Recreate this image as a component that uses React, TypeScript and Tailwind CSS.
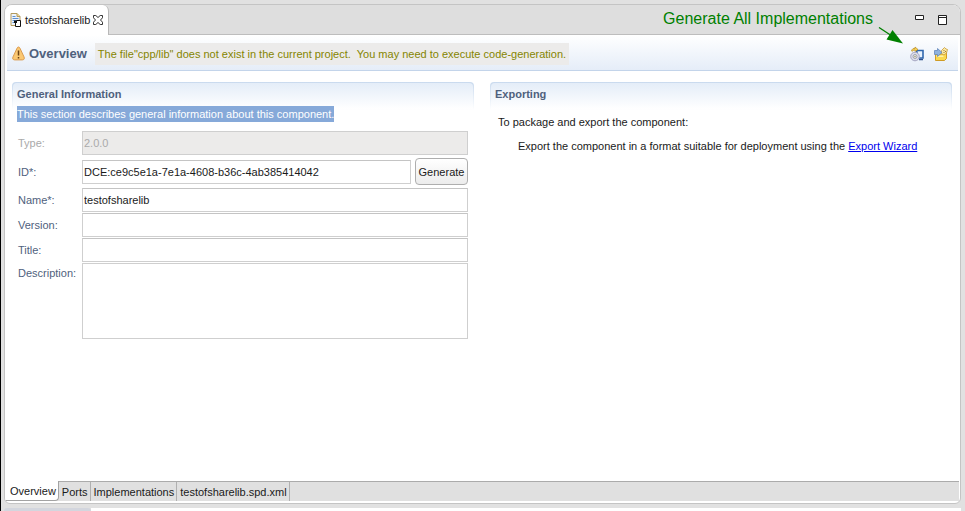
import React from "react";

const fieldClass =
  "h-6 w-full min-w-0 flex-1 border border-[#cfcfcf] border-t-[#c4c4c4] bg-white px-px text-[11px] text-[#1a1a1a] outline-none";

function FileIcon() {
  return (
    <svg width="12" height="16" viewBox="0 0 12 16" aria-hidden="true">
      <path d="M1 1.5h6l3 3v9H1z" fill="#eef4fc" stroke="#b39a5c" />
      <path d="M7 1.5v3h3" fill="#f3d98c" stroke="#b39a5c" />
      <path d="M2.5 4.5h3M2.5 6.5h6M2.5 8.5h5M2.5 10.5h3" stroke="#5b8fd0" />
      <path d="M6.5 8.500h4v6h-5v-4" fill="#fff" stroke="#111" />
      <path d="M4 8.500h3v2.500H4z" fill="#111" />
    </svg>
  );
}

function CloseIcon() {
  return (
    <svg width="10" height="10" viewBox="0 0 10 10" aria-hidden="true">
      <path
        d="M.5.5h2.300L5 2.500 7.200.5h2.300v2.300L7.500 5l2 2.200v2.300H7.200L5 7.500 2.800 9.500H.5V7.200l2-2.200-2-2.200z"
        fill="#fff"
        stroke="#333"
      />
    </svg>
  );
}

function WarningIcon() {
  return (
    <svg width="13" height="15" viewBox="0 0 13 15" aria-hidden="true">
      <path
        d="M6.500 1C7.200 1 7.600 1.500 8 2.300l4 8.600c.7 1.700.2 3-1.600 3H2.600c-1.800 0-2.300-1.300-1.600-3l4-8.600C5.400 1.500 5.800 1 6.500 1z"
        fill="#fbc872"
        stroke="#d99a50"
      />
      <path d="M6.500 4.500v5M6.500 11v1.500" stroke="#6b4216" strokeWidth="1.500" />
    </svg>
  );
}

function GenerateIcon() {
  return (
    <svg width="14" height="16" viewBox="0 0 14 16" aria-hidden="true">
      <path d="M6.500 4.500H13v7.500H8z" fill="#e8f2fd" stroke="#2f66ad" strokeWidth="1.600" />
      <path d="M9 13.500h4" stroke="#2b4f8c" strokeWidth="1.500" />
      <path d="M1.500 5C2 2.800 3.500 2 5 2.500V1l3 2.500-3 2V4.200c-1.200-.2-2 0-2.300 1z" fill="#f7d358" stroke="#b88a22" strokeWidth=".7" />
      <circle cx="5" cy="10.500" r="4.300" fill="#dedeea" stroke="#a3a4c0" />
      <circle cx="5" cy="10.500" r="2" fill="#f6f2c9" stroke="#9da1bb" />
      <circle cx="5" cy="10.500" r=".7" fill="#787c99" />
    </svg>
  );
}

function PackageIcon() {
  return (
    <svg width="14" height="16" viewBox="0 0 14 16" aria-hidden="true">
      <path d="M1.500 8h8l3-2v6.500l-2 2h-9z" fill="#fbd94f" stroke="#cf9b25" />
      <path d="M2.500 9.500h7V11h-7z" fill="#fff1a8" />
      <path d="M7.500 4.500l3-3 1.500 1.500 1.500.5-1 3.500-2.500 2-2.500-1.500z" fill="#fbe9a4" stroke="#c89a37" strokeWidth=".8" />
      <path d="M9.500 4.500h1M11 5.500h1M9.500 6.500h1" stroke="#9c7433" />
      <path d="M.5 4.500h3V2.500L8 6.500l-4.500 4V8.500h-3z" fill="#8eb2df" stroke="#6488ba" strokeWidth=".8" />
    </svg>
  );
}

function Section({ title, children }: { title: string; children: React.ReactNode }) {
  return (
    <section className="relative min-w-0">
      <div className="absolute inset-x-0 top-0 h-7 rounded-t bg-linear-to-b from-[#c9daee] to-white p-px">
        <div className="h-full rounded-t-sm bg-linear-to-b from-[#e4edf8] to-white" />
      </div>
      <div className="relative px-[5px]">
        <h2 className="flex h-6 items-center text-[11px] font-bold text-[#4f617d]">{title}</h2>
        {children}
      </div>
    </section>
  );
}

function Row({ id, label, muted, tall, children }: {
  id: string;
  label: string;
  muted?: boolean;
  tall?: boolean;
  children: React.ReactNode;
}) {
  return (
    <div className={tall ? "flex items-start" : "flex items-center"}>
      <label
        htmlFor={id}
        className={`w-16 shrink-0 ${tall ? "pt-0.5" : ""} ${muted ? "text-[#aaaaaa]" : "text-[#4f617d]"}`}
      >
        {label}
      </label>
      {children}
    </div>
  );
}

export default function App() {
  const pages = ["Ports", "Implementations", "testofsharelib.spd.xml"];
  return (
    <div className="flex min-h-screen flex-col border-l border-black bg-[#e1e1e1] pt-1 pl-[3px] font-['Liberation_Sans',Arial,sans-serif] text-[11px] leading-4 text-[#1a1a1a]">
      <div className="mr-1 flex flex-1 flex-col overflow-hidden rounded-t-lg rounded-b-md border border-[#c4c4c4] bg-white">
        <div className="flex h-[30px] shrink-0 bg-[#dedede]">
          <div role="tab" aria-selected="true" className="flex items-center gap-[3px] rounded-tr-md border-r border-[#b8b8b8] bg-white px-[5px]">
            <FileIcon />
            <span>testofsharelib</span>
            <button type="button" aria-label="Close tab">
              <CloseIcon />
            </button>
          </div>
          <div className="relative flex flex-1 items-center justify-end border-b border-[#bdbdbd] pr-[13px]">
            <div className="absolute top-[4px] right-[87px] text-base leading-5 whitespace-nowrap text-[#008000]">
              Generate All Implementations
            </div>
            <svg className="absolute top-[22px] right-[56px] z-10" width="26" height="18" viewBox="0 0 26 18" aria-hidden="true">
              <path d="M1 .5L14 9" stroke="#008000" strokeWidth="1.300" />
              <path d="M25 16.500L8.500 12.500 14.500 3z" fill="#008000" />
            </svg>
            <button type="button" aria-label="Minimize" className="mr-[14px] mb-1">
              <svg width="9" height="5" viewBox="0 0 9 5">
                <path d="M.5.5h8v4h-8z" fill="#fff" stroke="#222" />
              </svg>
            </button>
            <button type="button" aria-label="Maximize">
              <svg width="9" height="10" viewBox="0 0 9 10">
                <path d="M.5.5h8v9h-8zM.5 2.500h8" fill="#fff" stroke="#222" />
              </svg>
            </button>
          </div>
        </div>

        <header className="mx-0.5 flex h-9 shrink-0 items-center border-b border-[#c3d4ea] bg-linear-to-b from-white to-[#e5edf8] pt-0.5 pr-[10px] pl-[5px]">
          <WarningIcon />
          <h1 className="ml-1 text-[13px] font-bold text-[#4f617d]">Overview</h1>
          <p className="ml-2 flex h-[22px] items-center bg-[#ecebea] px-[3px] whitespace-pre text-[#858500]">
            {'The file"cpp/lib" does not exist in the current project.  You may need to execute code-generation.'}
          </p>
          <div className="ml-auto flex gap-[10px]">
            <button type="button" aria-label="Generate All Implementations">
              <GenerateIcon />
            </button>
            <button type="button" aria-label="Package component">
              <PackageIcon />
            </button>
          </div>
        </header>

        <main className="grid flex-1 grid-cols-2 gap-4 pt-[11px] pr-2 pl-[7px]">
          <Section title="General Information">
            <p>
              <span className="inline-block bg-[#86a9d9] text-white">
                This section describes general information about this component.
              </span>
            </p>
            <form className="mt-[9px] pr-px pl-px" onSubmit={(e) => e.preventDefault()}>
              <div className="flex flex-col gap-[3px]">
                <Row id="type" label="Type:" muted>
                  <input id="type" disabled defaultValue="2.0.0" className="h-6 w-full min-w-0 flex-1 border border-[#cfcfcf] bg-[#ecebea] px-px text-[11px] text-[#aaaaaa]" />
                </Row>
                <Row id="cid" label="ID*:">
                  <input id="cid" defaultValue="DCE:ce9c5e1a-7e1a-4608-b36c-4ab385414042" className={fieldClass} />
                  <button type="button" className="ml-1 h-[27px] w-[53px] rounded border border-[#aeaeae] bg-linear-to-b from-white to-[#ececec] text-center">
                    Generate
                  </button>
                </Row>
                <Row id="name" label="Name*:">
                  <input id="name" defaultValue="testofsharelib" className={fieldClass} />
                </Row>
              </div>
              <div className="mt-px flex flex-col gap-px">
                <Row id="version" label="Version:">
                  <input id="version" className={fieldClass} />
                </Row>
                <Row id="title" label="Title:">
                  <input id="title" className={fieldClass} />
                </Row>
                <Row id="description" label="Description:" tall>
                  <textarea id="description" className="block h-19 min-w-0 flex-1 resize-none border border-[#cfcfcf] bg-white px-px outline-none" />
                </Row>
              </div>
            </form>
          </Section>

          <Section title="Exporting">
            <div className="flex flex-col gap-2 pt-2 pl-[3px]">
              <p>To package and export the component:</p>
              <p className="pl-5 whitespace-nowrap">
                Export the component in a format suitable for deployment using the{" "}
                <a href="#export" className="text-[#0000ee] underline">
                  Export Wizard
                </a>
              </p>
            </div>
          </Section>
        </main>

        <nav role="tablist" className="mr-px mb-0.5 flex h-5 shrink-0 border-t border-[#ababab] bg-[#e0e0e0]">
          <button type="button" role="tab" aria-selected="true" className="-mt-px rounded-br border-r border-b border-[#a3a3a3] bg-white pr-0.5 pl-[5px]">
            Overview
          </button>
          {pages.map((page) => (
            <button key={page} type="button" role="tab" aria-selected="false" className="border-r border-[#b0b0b0] pr-0.5 pl-[3px]">
              {page}
            </button>
          ))}
        </nav>
      </div>
      <div className="mt-1 flex h-[3px] shrink-0">
        <div className="w-[87px] rounded-t bg-[#d3d6de]" />
        <div className="mr-1 flex-1 bg-white" />
      </div>
    </div>
  );
}
